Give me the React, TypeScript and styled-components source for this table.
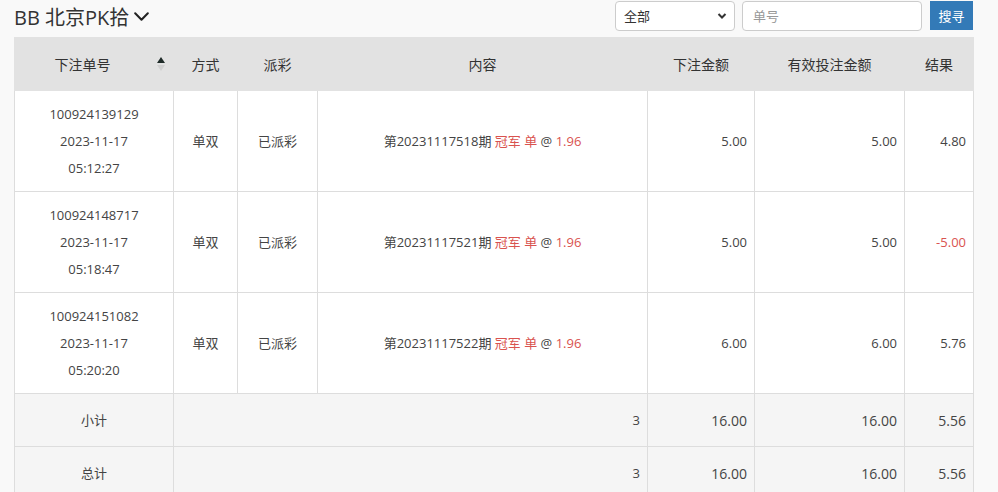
import React from "react";
import styled, { createGlobalStyle } from "styled-components";

const Global = createGlobalStyle`
  html, body { margin: 0; padding: 0; background: #f9f9f9; }
  body { font-family: "Open Sans", "Noto Sans CJK SC", sans-serif; color: #444; }
  * { box-sizing: border-box; }
`;

const Page = styled.div`
  width: 959px;
  margin-left: 14px;
`;

const Toolbar = styled.div`
  display: flex;
  align-items: center;
  justify-content: space-between;
  height: 31px;
  margin-bottom: 6px;
`;

const Title = styled.div`
  display: flex;
  align-items: center;
  gap: 3px;
  font-size: 20px;
  color: #333;
  margin-top: 1px;
`;

const Controls = styled.div`
  display: flex;
  align-items: center;
`;

const SelectWrap = styled.div`
  position: relative;
  width: 120px;
  height: 30px;
  margin-top: 1px;
`;

const Select = styled.select`
  appearance: none;
  width: 100%;
  height: 100%;
  border: 1px solid #ccc;
  border-radius: 4px;
  background: #fff;
  font-family: inherit;
  font-size: 13px;
  color: #333;
  padding: 0 8px;
`;

const Caret = styled.svg`
  position: absolute;
  right: 8px;
  top: 11px;
  pointer-events: none;
`;

const Input = styled.input`
  width: 180px;
  height: 30px;
  margin-left: 7px;
  margin-top: 1px;
  border: 1px solid #ccc;
  border-radius: 4px;
  background: #fff;
  font-family: inherit;
  font-size: 13px;
  padding: 0 10px;
  &::placeholder { color: #999; }
`;

const Button = styled.button`
  width: 43px;
  height: 29px;
  margin-left: 8px;
  border: none;
  background: #337ab7;
  color: #fff;
  font-family: inherit;
  font-size: 13px;
  padding: 0;
`;

const Table = styled.table`
  width: 959px;
  border-collapse: collapse;
  table-layout: fixed;
  background: #fff;
`;

const Th = styled.th<{ $sort?: boolean }>`
  background: #e2e2e2;
  height: 53px;
  font-weight: normal;
  font-size: 14px;
  color: #333;
  text-align: center;
  border: 1px solid #e2e2e2;
  padding: 0 ${(p) => (p.$sort ? "27px" : "4px")} 0 4px;
  position: relative;
`;

const SortIcon = styled.span`
  position: absolute;
  right: 8px;
  top: 19px;
  display: flex;
  flex-direction: column;
  gap: 2px;
`;

const Tri = styled.span<{ $up?: boolean; $active?: boolean }>`
  width: 0;
  height: 0;
  border-left: 4.5px solid transparent;
  border-right: 4.5px solid transparent;
  ${(p) =>
    p.$up
      ? `border-bottom: 6px solid ${p.$active ? "#1f2b28" : "#bbb"};`
      : `border-top: 6px solid ${p.$active ? "#1f2b28" : "#d0d0d0"};`}
`;

const Td = styled.td<{ $align?: string; $big?: boolean }>`
  border: 1px solid #ddd;
  padding: 10px 7px 9px;
  font-size: ${(p) => (p.$big ? "14px" : "13px")};
  line-height: 27px;
  text-align: ${(p) => p.$align || "center"};
  vertical-align: middle;
`;

const TotalRow = styled.tr`
  background: #f5f5f5;
  td {
    height: 53px;
    padding-top: 0;
    padding-bottom: 0;
  }
`;

const Red = styled.span`
  color: #d9534f;
`;

const Line = styled.div``;

const rows = [
  { id: "100924139129", date: "2023-11-17", time: "05:12:27", issue: "20231117518", amt: "5.00", valid: "5.00", res: "4.80", neg: false },
  { id: "100924148717", date: "2023-11-17", time: "05:18:47", issue: "20231117521", amt: "5.00", valid: "5.00", res: "-5.00", neg: true },
  { id: "100924151082", date: "2023-11-17", time: "05:20:20", issue: "20231117522", amt: "6.00", valid: "6.00", res: "5.76", neg: false },
];

export default function App() {
  return (
    <Page>
      <Global />
      <Toolbar>
        <Title>
          BB 北京PK拾
          <svg width="19" height="19" viewBox="0 0 24 24" fill="none" stroke="#222" strokeWidth="2.6" strokeLinecap="round" strokeLinejoin="round">
            <polyline points="4 8 12 16 20 8" />
          </svg>
        </Title>
        <Controls>
          <SelectWrap>
            <Select defaultValue="all">
              <option value="all">全部</option>
            </Select>
            <Caret width="10" height="8" viewBox="0 0 10 8">
              <polyline points="1.5 2 5 5.5 8.5 2" fill="none" stroke="#333" strokeWidth="2" />
            </Caret>
          </SelectWrap>
          <Input placeholder="单号" />
          <Button>搜寻</Button>
        </Controls>
      </Toolbar>
      <Table>
        <colgroup>
          <col style={{ width: 159 }} />
          <col style={{ width: 64 }} />
          <col style={{ width: 80 }} />
          <col style={{ width: 330 }} />
          <col style={{ width: 107 }} />
          <col style={{ width: 150 }} />
          <col style={{ width: 69 }} />
        </colgroup>
        <thead>
          <tr>
            <Th $sort>
              下注单号
              <SortIcon>
                <Tri $up $active />
                <Tri />
              </SortIcon>
            </Th>
            <Th>方式</Th>
            <Th>派彩</Th>
            <Th>内容</Th>
            <Th>下注金额</Th>
            <Th>有效投注金额</Th>
            <Th>结果</Th>
          </tr>
        </thead>
        <tbody>
          {rows.map((r) => (
            <tr key={r.id}>
              <Td>
                <Line>{r.id}</Line>
                <Line>{r.date}</Line>
                <Line>{r.time}</Line>
              </Td>
              <Td>单双</Td>
              <Td>已派彩</Td>
              <Td>
                第{r.issue}期 <Red>冠军 单</Red> @ <Red>1.96</Red>
              </Td>
              <Td $align="right">{r.amt}</Td>
              <Td $align="right">{r.valid}</Td>
              <Td $align="right">{r.neg ? <Red>{r.res}</Red> : r.res}</Td>
            </tr>
          ))}
          <TotalRow>
            <Td>小计</Td>
            <Td colSpan={3} $align="right">3</Td>
            <Td $align="right" $big>16.00</Td>
            <Td $align="right" $big>16.00</Td>
            <Td $align="right" $big>5.56</Td>
          </TotalRow>
          <TotalRow>
            <Td>总计</Td>
            <Td colSpan={3} $align="right">3</Td>
            <Td $align="right" $big>16.00</Td>
            <Td $align="right" $big>16.00</Td>
            <Td $align="right" $big>5.56</Td>
          </TotalRow>
        </tbody>
      </Table>
    </Page>
  );
}
